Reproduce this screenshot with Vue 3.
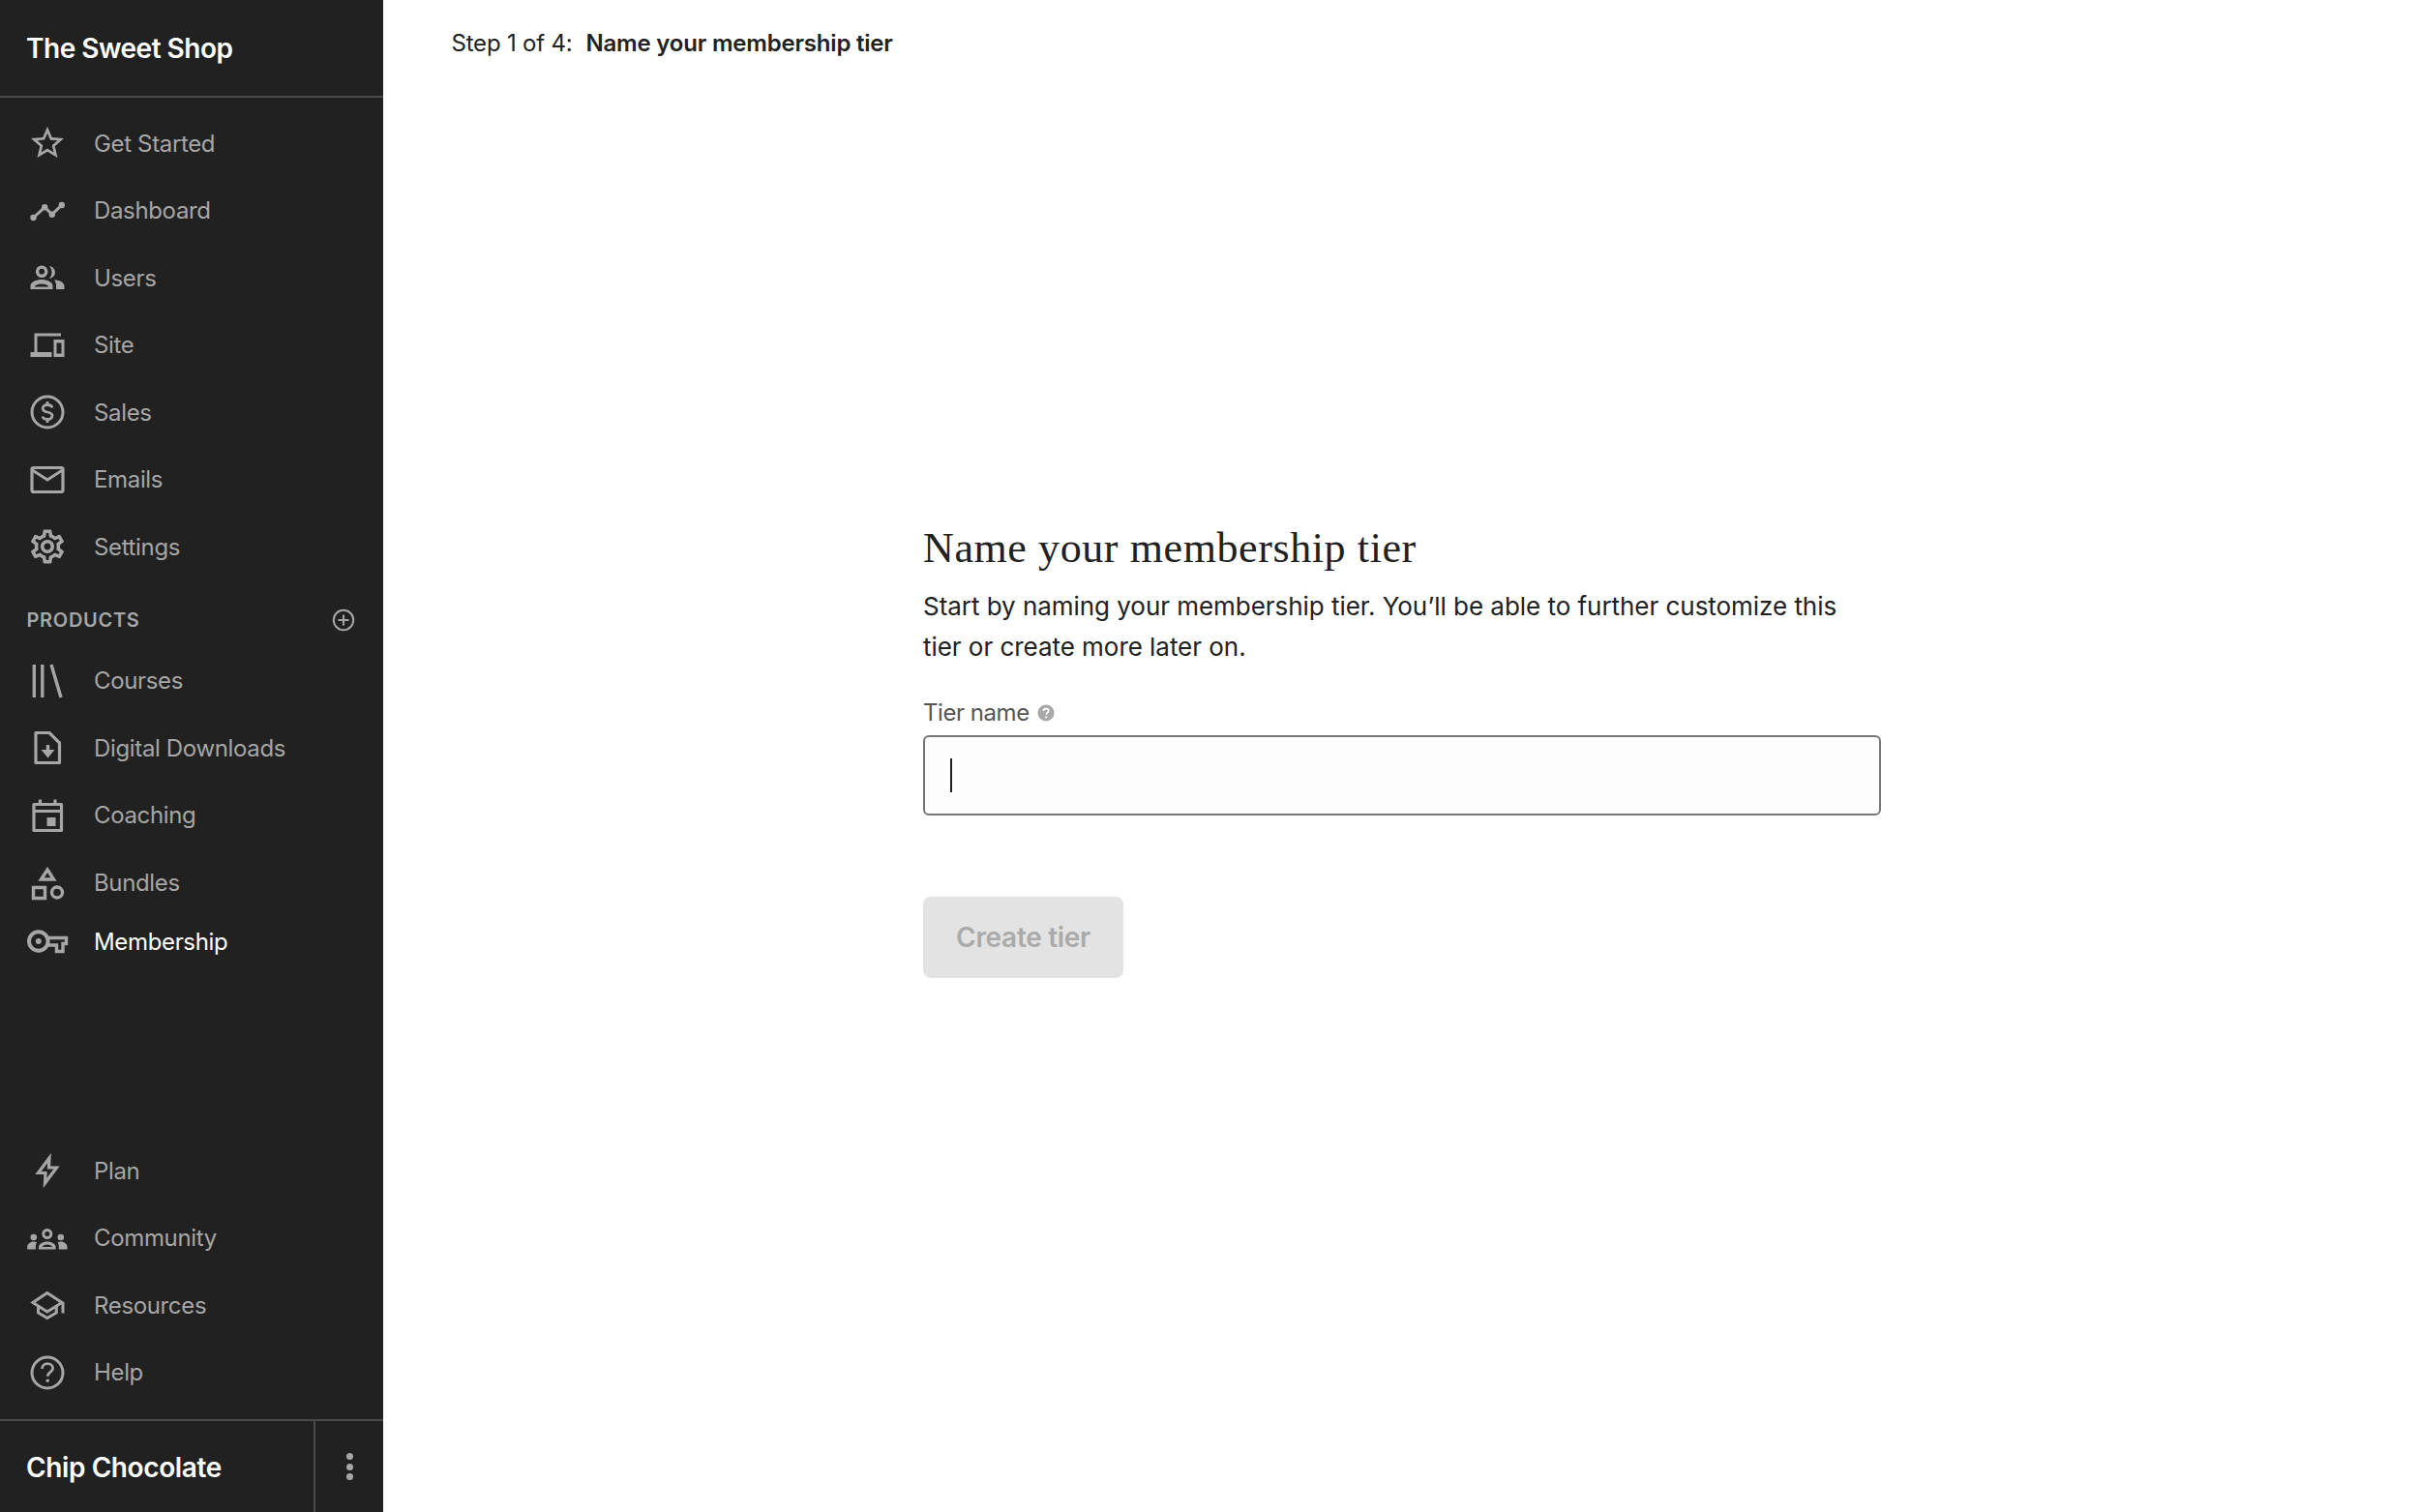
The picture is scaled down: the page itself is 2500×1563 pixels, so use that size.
<template>
  <div class="layout">
    <aside class="sidebar">
      <div class="school-name">The Sweet Shop</div>

      <nav class="nav main-nav">
        <a v-for="item in mainNav" :key="item.label" class="nav-item">
          <svg class="icon" viewBox="0 0 36 36" v-html="icons[item.icon]"></svg>
          <span>{{ item.label }}</span>
        </a>
      </nav>

      <div class="section-title">
        <span>PRODUCTS</span>
        <svg class="plus" viewBox="0 0 24 24">
          <circle cx="12" cy="12" r="10.2" fill="none" stroke="currentColor" stroke-width="2" />
          <path d="M12 6.5v11M6.5 12h11" fill="none" stroke="currentColor" stroke-width="2" />
        </svg>
      </div>

      <nav class="nav">
        <a v-for="item in productNav" :key="item.label" class="nav-item">
          <svg class="icon" viewBox="0 0 36 36" v-html="icons[item.icon]"></svg>
          <span>{{ item.label }}</span>
        </a>
        <a class="nav-item active">
          <svg class="icon" viewBox="0 0 36 36" v-html="icons.key"></svg>
          <span>Membership</span>
        </a>
      </nav>

      <nav class="nav bottom-nav">
        <a v-for="item in bottomNav" :key="item.label" class="nav-item">
          <svg class="icon" viewBox="0 0 36 36" v-html="icons[item.icon]"></svg>
          <span>{{ item.label }}</span>
        </a>
      </nav>

      <div class="account">
        <div class="account-name">Chip Chocolate</div>
        <div class="account-menu">
          <i></i><i></i><i></i>
        </div>
      </div>
    </aside>

    <main class="content">
      <div class="step">
        <span>Step 1 of 4:</span>
        <strong>Name your membership tier</strong>
      </div>

      <form class="tier-form" @submit.prevent>
        <h1>Name your membership tier</h1>
        <p>Start by naming your membership tier. You’ll be able to further customize this tier or create more later on.</p>

        <label class="field-label">
          Tier name
          <svg class="hint" viewBox="0 0 18 18">
            <circle cx="9" cy="9" r="8.5" fill="#a8a8a8" />
            <path d="M6.4 7c.1-1.6 1.2-2.4 2.7-2.4s2.6.9 2.6 2.2c0 1.9-2.4 2-2.4 3.9" fill="none" stroke="#fff" stroke-width="1.7" />
            <circle cx="9.2" cy="13.3" r="1.1" fill="#fff" />
          </svg>
        </label>
        <div class="input">
          <span class="caret"></span>
        </div>

        <button class="btn-create" type="button" disabled>Create tier</button>
      </form>
    </main>
  </div>
</template>

<script setup>
const mainNav = [
  { label: 'Get Started', icon: 'star' },
  { label: 'Dashboard', icon: 'chart' },
  { label: 'Users', icon: 'users' },
  { label: 'Site', icon: 'devices' },
  { label: 'Sales', icon: 'dollar' },
  { label: 'Emails', icon: 'mail' },
  { label: 'Settings', icon: 'gear' }
]

const productNav = [
  { label: 'Courses', icon: 'library' },
  { label: 'Digital Downloads', icon: 'download' },
  { label: 'Coaching', icon: 'calendar' },
  { label: 'Bundles', icon: 'shapes' }
]

const bottomNav = [
  { label: 'Plan', icon: 'bolt' },
  { label: 'Community', icon: 'community' },
  { label: 'Resources', icon: 'school' },
  { label: 'Help', icon: 'help' }
]

const line = 'fill="none" stroke="currentColor"'

const icons = {
  star: `<path fill="currentColor" transform="translate(-2.4 -2.6) scale(1.7)" d="M22 9.24l-7.19-.62L12 2 9.19 8.63 2 9.24l5.46 4.73L5.82 21 12 17.27 18.18 21l-1.63-7.03L22 9.24zM12 15.4l-3.76 2.27 1-4.28-3.32-2.88 4.38-.38L12 6.1l1.71 4.04 4.38.38-3.32 2.88 1 4.28L12 15.4z"/>`,
  chart: `<path ${line} stroke-width="3" d="M3.5 25 15.2 14.3 22.8 21.7 32.8 12"/>
    <g fill="currentColor"><circle cx="3.5" cy="25" r="3.2"/><circle cx="15.2" cy="14.3" r="3.2"/><circle cx="22.8" cy="21.7" r="3.2"/><circle cx="32.8" cy="12" r="3.2"/></g>`,
  users: `<circle ${line} stroke-width="3.4" cx="12.2" cy="11.7" r="4.6"/>
    <path fill="currentColor" fill-rule="evenodd" d="M.5 30v-3.5c0-4 6-6.5 11.500-6.500s11.500 2.500 11.500 6.500V30zM4.500 27.500h15c-1-2-4-3-7.500-3s-6.500 1-7.500 3z"/>
    <path fill="currentColor" d="M19.500 6a6.500 6.500 0 0 1 0 13c2-1.500 3-4 3-6.500s-1-5-3-6.500zM25 20.200c6 .5 10.500 2.800 10.500 6.800v3H27v-3.500c0-2.800-.6-4.800-2-6.300z"/>`,
  devices: `<path fill="currentColor" fill-rule="evenodd" d="M4.500 5.500H32v3H7.500V25H22.500v5H.5v-5h4zM24.500 12h11v18h-11zM27.500 15.500v11h5v-11z"/>`,
  dollar: `<circle ${line} stroke-width="3" cx="18" cy="18" r="16"/>
    <path ${line} stroke-width="2.800" d="M23 13.500c-.5-2-2.300-3-5-3s-4.800 1.300-4.800 3.700 2.300 3.300 4.800 3.800 5 1.500 5 3.800-2.300 3.700-5 3.700-4.500-1-5-3M18 7v3.500M18 25.500V29"/>`,
  mail: `<rect ${line} stroke-width="3.2" x="2" y="5.500" width="32" height="25" rx="1.500"/>
    <path ${line} stroke-width="3" d="M2.500 8 18 18 33.500 8"/>`,
  gear: `<path fill="currentColor" transform="translate(-3 -3) scale(1.75)" d="M19.430 12.980c.04-.32.07-.64.07-.98 0-.34-.03-.66-.07-.98l2.110-1.650c.19-.15.24-.42.12-.64l-2-3.460c-.09-.16-.26-.25-.44-.25-.06 0-.12.01-.17.03l-2.490 1c-.52-.4-1.080-.73-1.690-.98l-.38-2.650C14.460 2.180 14.250 2 14 2h-4c-.25 0-.46.18-.49.42l-.38 2.650c-.61.25-1.170.59-1.690.98l-2.490-1c-.06-.02-.12-.03-.18-.03-.17 0-.34.09-.43.25l-2 3.460c-.13.22-.07.49.12.64l2.110 1.650c-.04.32-.07.65-.07.98 0 .33.03.66.07.98l-2.110 1.650c-.19.15-.24.42-.12.64l2 3.460c.09.16.26.25.44.25.06 0 .12-.01.17-.03l2.490-1c.52.4 1.080.73 1.690.98l.38 2.650c.03.24.24.42.49.42h4c.25 0 .46-.18.49-.42l.38-2.650c.61-.25 1.170-.59 1.690-.98l2.490 1c.06.02.12.03.18.03.17 0 .34-.09.43-.25l2-3.460c.12-.22.07-.49-.12-.64l-2.110-1.650zm-1.980-1.710c.04.31.05.52.05.73 0 .21-.02.43-.05.73l-.14 1.130.89.7 1.080.84-.7 1.210-1.270-.51-1.040-.42-.9.68c-.43.32-.84.56-1.250.73l-1.060.43-.16 1.130-.2 1.350h-1.400l-.19-1.350-.16-1.130-1.060-.43c-.43-.18-.83-.41-1.230-.71l-.91-.7-1.060.43-1.270.51-.7-1.210 1.080-.84.89-.7-.14-1.130c-.03-.31-.05-.54-.05-.74s.02-.43.05-.73l.14-1.130-.89-.7-1.080-.84.7-1.210 1.270.51 1.040.42.9-.68c.43-.32.84-.56 1.250-.73l1.060-.43.16-1.130.2-1.350h1.390l.19 1.350.16 1.130 1.060.43c.43.18.83.41 1.230.71l.91.7 1.060-.43 1.270-.51.7 1.210-1.070.85-.89.7.14 1.130zM12 8c-2.210 0-4 1.790-4 4s1.790 4 4 4 4-1.790 4-4-1.790-4-4-4zm0 6c-1.100 0-2-.9-2-2s.9-2 2-2 2 .9 2 2-.9 2-2 2z"/>`,
  library: `<path ${line} stroke-width="3.400" d="M4.300 1v34M12.800 1v34M22 1l10 34"/>`,
  download: `<path ${line} stroke-width="3.200" stroke-linejoin="round" d="M6 2.500h14l10.500 10.500v20.500H6z"/>
    <path ${line} stroke-width="3.400" d="M18.500 15v10"/><path fill="currentColor" d="M11.500 20h14L18.500 28.500z"/>`,
  calendar: `<path ${line} stroke-width="3.200" stroke-linejoin="round" d="M4 6.500h28.500v27H4zM4 13.500h28.500M10.500 1.500v6M26 1.500v6"/>
    <rect fill="currentColor" x="17.500" y="20" width="9" height="9"/>`,
  shapes: `<path ${line} stroke-width="3.400" d="M18 5 24.500 15h-13zM3.500 23.500h12v11h-12z"/>
    <circle ${line} stroke-width="3.400" cx="28" cy="28.500" r="5.500"/>`,
  key: `<circle ${line} stroke-width="4" cx="8.800" cy="18" r="9.800"/>
    <circle fill="currentColor" cx="8.800" cy="18" r="3"/>
    <path ${line} stroke-width="3.400" d="M18.500 14.500h19v6H34v8h-6.500V22H18.500"/>`,
  bolt: `<path ${line} stroke-width="3.200" stroke-linejoin="miter" d="M20 5 8.500 20.500H16L15.500 31 27.500 15H19.500z"/>`,
  community: `<circle ${line} stroke-width="3" cx="17.800" cy="13.500" r="4"/>
    <path fill="currentColor" fill-rule="evenodd" d="M9 29.500v-2.500c0-3 4-5.500 8.800-5.500s8.800 2.500 8.800 5.500v2.500zM12.500 27h10.600c-.8-1.500-2.900-2.500-5.300-2.500s-4.500 1-5.300 2.500z"/>
    <g fill="currentColor"><circle cx="3.800" cy="17" r="3.300"/><circle cx="31.800" cy="17" r="3.300"/>
    <path d="M-2.800 29.500v-2.500c0-3 3-5.500 6.500-5.500 1.300 0 2.500.3 3.500.8-.9 1.200-1.300 2.700-1.300 4.200v3zM38.500 29.500v-2.500c0-3-3-5.500-6.500-5.500-1.300 0-2.500.3-3.500.8.9 1.200 1.300 2.700 1.300 4.200v3z"/></g>`,
  school: `<path ${line} stroke-width="3" d="M17.800 5.500 3 15.500 17.800 25 33 15.500zM8.500 19.500v6.500L17.800 31.500l9.500-5.500v-6.500M34 15.500v11"/>`,
  help: `<circle ${line} stroke-width="3" cx="18" cy="18" r="16"/>
    <path ${line} stroke-width="2.800" d="M12.500 14c.1-3.300 2.500-5.300 5.600-5.300s5.500 1.900 5.500 4.700c0 4-5.400 4-5.400 8.300"/>
    <circle fill="currentColor" cx="18.200" cy="26.200" r="1.800"/>`
}
</script>

<style>
html,
body {
  margin: 0;
  background: #fff;
}
</style>

<style scoped>
.layout {
  display: flex;
  height: 100vh;
  min-height: 1563px;
  font-family: Inter, "Liberation Sans", sans-serif;
  color: #212121;
}

.sidebar {
  flex: 0 0 396px;
  display: flex;
  flex-direction: column;
  background: #212121;
  color: #a6a6a6;
}

.school-name {
  height: 99px;
  line-height: 101px;
  padding-left: 27px;
  border-bottom: 2px solid #4a4a4a;
  font-size: 28px;
  font-weight: 600;
  letter-spacing: -0.5px;
  color: #fff;
}

.main-nav {
  padding-top: 12.5px;
}

.nav-item {
  display: flex;
  align-items: center;
  height: 69.5px;
  padding-left: 30.5px;
  font-size: 24px;
  letter-spacing: -0.35px;
  color: #a6a6a6;
}

.nav-item.active {
  height: 52px;
  color: #fff;
}

.nav-item.active .icon {
  color: #a6a6a6;
}

.icon {
  flex: 0 0 36px;
  width: 36px;
  height: 36px;
  margin-right: 30.5px;
  overflow: visible;
}

.section-title {
  display: flex;
  align-items: center;
  justify-content: space-between;
  height: 69px;
  padding: 13px 29px 0 27.5px;
  box-sizing: border-box;
  font-size: 20px;
  font-weight: 600;
  letter-spacing: 0.7px;
}

.plus {
  width: 24px;
  height: 24px;
}

.bottom-nav {
  margin-top: auto;
  padding-bottom: 13.5px;
}

.account {
  display: flex;
  height: 94px;
  border-top: 2px solid #4a4a4a;
}

.account-name {
  flex: 1;
  padding-left: 27px;
  line-height: 96px;
  font-size: 28px;
  font-weight: 600;
  letter-spacing: -0.4px;
  color: #fff;
}

.account-menu {
  flex: 0 0 70px;
  display: flex;
  flex-direction: column;
  align-items: center;
  justify-content: center;
  gap: 3.5px;
  border-left: 2px solid #4a4a4a;
}

.account-menu i {
  width: 7px;
  height: 7px;
  border-radius: 50%;
  background: #a6a6a6;
}

.content {
  flex: 1;
}

.step {
  display: flex;
  gap: 14px;
  padding: 28px 0 0 70.5px;
  font-size: 24px;
  line-height: 34px;
  letter-spacing: -0.2px;
}

.step strong {
  font-weight: 600;
}

.tier-form {
  width: 990px;
  margin-left: 558px;
  padding-top: 477px;
}

.tier-form h1 {
  margin: 0;
  font-family: "Liberation Serif", serif;
  font-size: 44px;
  font-weight: 400;
  line-height: 56px;
  letter-spacing: 0.6px;
}

.tier-form p {
  margin: 11px 0 0;
  font-size: 26px;
  line-height: 42px;
  letter-spacing: -0.04px;
}

.field-label {
  display: flex;
  align-items: center;
  gap: 8px;
  margin-top: 30px;
  font-size: 24px;
  line-height: 34px;
  letter-spacing: -0.45px;
  color: #555;
}

.hint {
  width: 18px;
  height: 18px;
}

.input {
  display: flex;
  align-items: center;
  height: 83px;
  margin-top: 6px;
  padding-left: 26px;
  box-sizing: border-box;
  background: #fdfdfd;
  border: 2px solid #767676;
  border-radius: 6px;
}

.caret {
  width: 2px;
  height: 35px;
  background: #212121;
}

.btn-create {
  display: block;
  width: 207px;
  height: 84px;
  margin-top: 84px;
  border: none;
  border-radius: 8px;
  background: #e3e3e3;
  color: #aaa;
  font-family: inherit;
  font-size: 28px;
  font-weight: 600;
  letter-spacing: -0.3px;
}
</style>
